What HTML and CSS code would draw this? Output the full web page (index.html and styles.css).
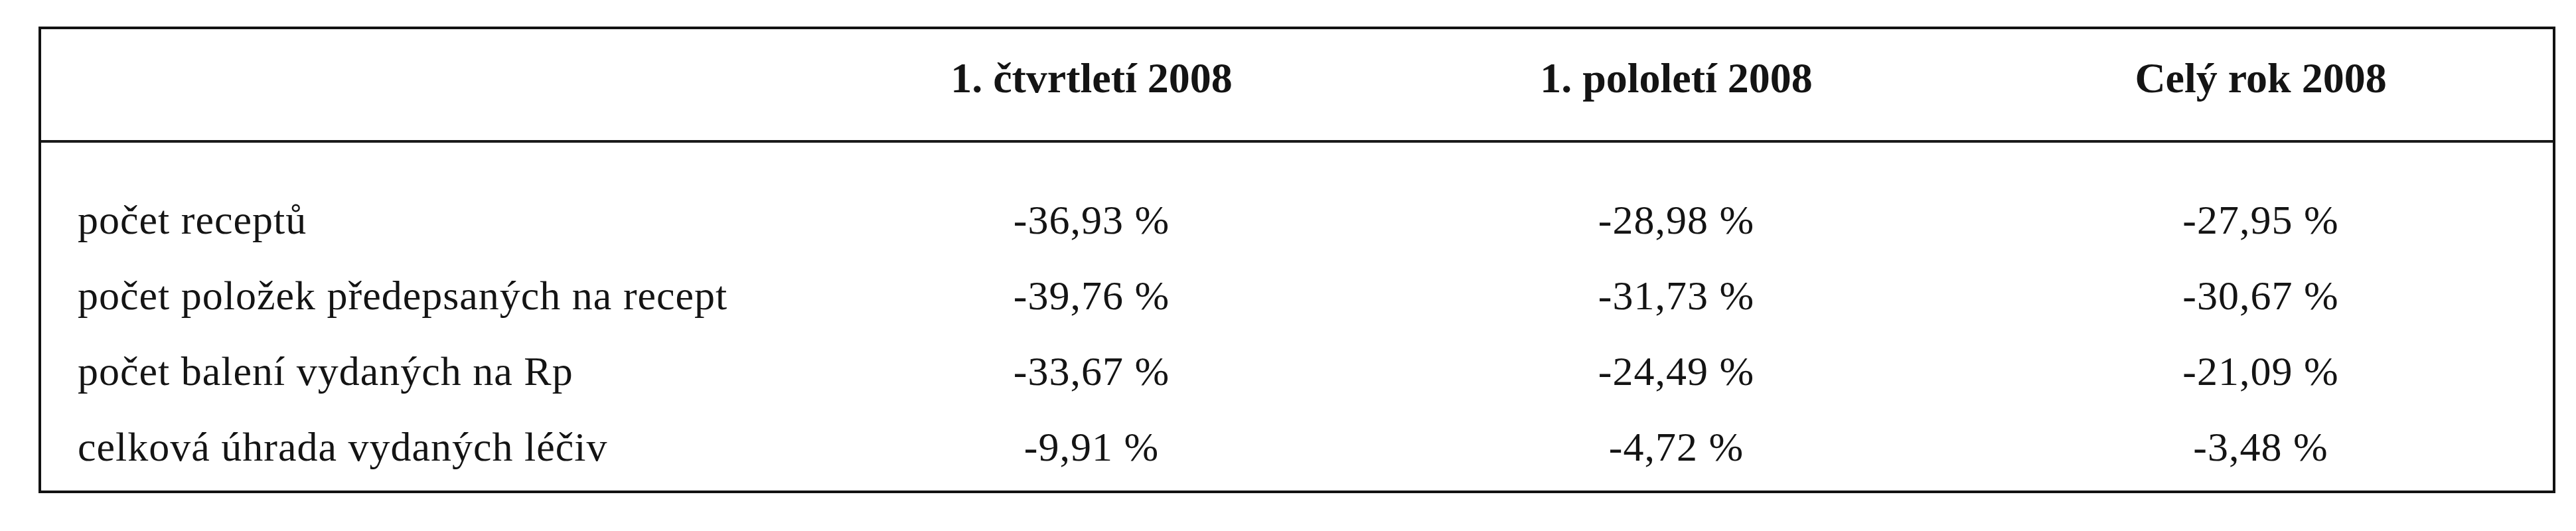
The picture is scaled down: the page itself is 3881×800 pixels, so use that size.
FILE: index.html
```html
<!DOCTYPE html>
<html lang="cs">
<head>
<meta charset="utf-8">
<title>Tabulka</title>
<link rel="stylesheet" href="styles.css">
</head>
<body>
<div class="page">
  <table class="data">
    <colgroup>
      <col class="c-label">
      <col class="c-num">
      <col class="c-num">
      <col class="c-num3">
    </colgroup>
    <thead>
      <tr>
        <th class="label"></th>
        <th>1. čtvrtletí 2008</th>
        <th>1. pololetí 2008</th>
        <th>Celý rok 2008</th>
      </tr>
    </thead>
    <tbody>
      <tr class="first">
        <td class="label">počet receptů</td>
        <td>-36,93 %</td>
        <td>-28,98 %</td>
        <td>-27,95 %</td>
      </tr>
      <tr>
        <td class="label">počet položek předepsaných na recept</td>
        <td>-39,76 %</td>
        <td>-31,73 %</td>
        <td>-30,67 %</td>
      </tr>
      <tr>
        <td class="label">počet balení vydaných na Rp</td>
        <td>-33,67 %</td>
        <td>-24,49 %</td>
        <td>-21,09 %</td>
      </tr>
      <tr class="last">
        <td class="label">celková úhrada vydaných léčiv</td>
        <td>-9,91 %</td>
        <td>-4,72 %</td>
        <td>-3,48 %</td>
      </tr>
    </tbody>
  </table>
</div>
</body>
</html>
```

FILE: styles.css
```css
html, body {
  margin: 0;
  padding: 0;
  background: #ffffff;
}

.page {
  width: 3881px;
  height: 800px;
  box-sizing: border-box;
  padding-top: 40px;
  padding-left: 58px;
  font-family: "Liberation Serif", "Times New Roman", serif;
  color: #141414;
}

.data {
  table-layout: fixed;
  width: 3792px;
  border-collapse: separate;
  border-spacing: 0;
  border: 4px solid #121212;
}

.c-label { width: 1142px; }
.c-num { width: 881px; }
.c-num3 { width: 880px; }

.data th {
  font-size: 64px;
  font-weight: bold;
  line-height: 80px;
  height: 80px;
  padding: 34px 0 53px 0;
  text-align: center;
  white-space: nowrap;
  border-bottom: 4px solid #1a1a1a;
}

.data td {
  font-size: 62px;
  font-weight: normal;
  letter-spacing: 1px;
  line-height: 114px;
  height: 114px;
  padding: 0;
  text-align: center;
  white-space: nowrap;
  vertical-align: top;
}

.data td.label {
  text-align: left;
  padding-left: 55px;
}

.data tr.first td {
  padding-top: 59px;
}

.data tr.last td {
  padding-bottom: 9px;
}
```
